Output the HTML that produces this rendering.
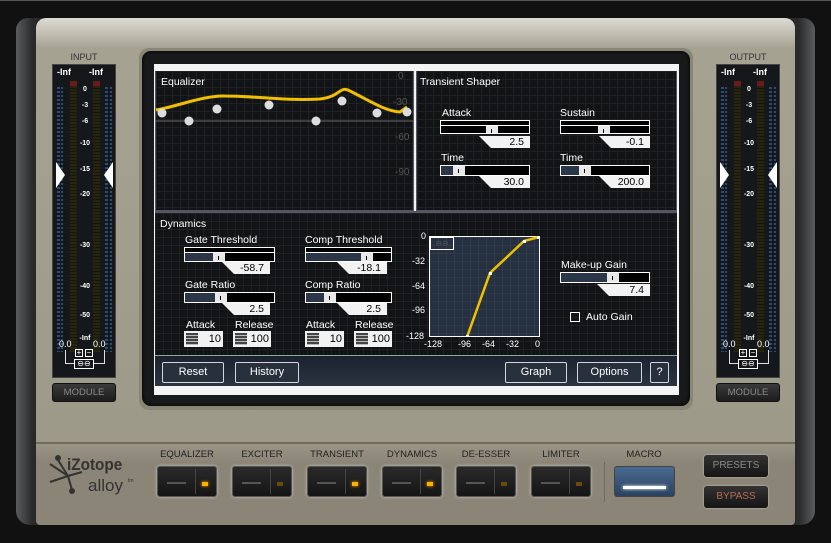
<!DOCTYPE html><html><head><style>
*{margin:0;padding:0;box-sizing:border-box}
body{width:831px;height:543px;background:#111;position:relative;overflow:hidden;font-family:"Liberation Sans",sans-serif}
.a{position:absolute}
.grid{background-color:#121314;background-image:linear-gradient(#1e2123 1px,transparent 1px),linear-gradient(90deg,#1e2123 1px,transparent 1px);background-size:8px 8px}
.t{color:#fff;font-size:10.5px;position:absolute;white-space:nowrap}
.bar{position:absolute;border:1px solid #fff;background:#000;height:11px}
.bar .f{position:absolute;left:0;top:0;bottom:0;background:#2b3648}
.bar .k{position:absolute;top:0;bottom:0;width:12px;background:#e8e8e8}
.bar .k:after{content:"";position:absolute;left:5px;top:3px;width:1px;height:4px;background:#000}
.val{position:absolute;background:#f2f2f2;color:#000;font-size:10.5px;text-align:right;padding-right:6px;height:12px;line-height:12px;clip-path:polygon(0 0,100% 0,100% 100%,12px 100%)}
.btn{position:absolute;border:1px solid #cfd6de;border-radius:2px;background:#28303c;color:#fff;font-size:11px;text-align:center;height:21px;line-height:19px}
.mb{position:absolute;width:60px;height:31px;background:linear-gradient(#2a2a2a,#151515);border:1px solid #555;border-radius:3px;box-shadow:0 0 3px #fff8}
.mb .d{position:absolute;left:37px;top:2px;bottom:2px;width:1px;background:#444}
.mb .ln{position:absolute;left:9px;top:15px;width:19px;height:2px;background:#555}
.mb .led{position:absolute;left:44px;top:15px;width:6px;height:4px;background:#6a4a10}
.mb .on{background:#ffb000;box-shadow:0 0 3px #ffa000}
.ml{position:absolute;font-size:9.5px;color:#222;width:80px;text-align:center}
.meter{position:absolute;width:64px;height:314px;background:#15181b;border:1px solid #444}
.sc{position:absolute;left:24px;width:16px;text-align:center;color:#fff;font-size:7px;font-weight:bold}
.ab{position:absolute;height:16px;background:#f2f2f2;color:#000;font-size:11px;text-align:right;padding-right:2px;line-height:16px}
.ab i{position:absolute;left:2px;top:2px;width:12px;height:12px;background:repeating-linear-gradient(#444 0 2px,#bbb 2px 3px)}
</style></head><body>
<div class="a" style="left:0;top:0;width:831px;height:1px;background:#555"></div>
<div class="a" style="left:16px;top:18px;width:40px;height:507px;border-radius:12px 0 0 14px;background:linear-gradient(90deg,#5a5c5e,#2a2b2c 40%,#1a1a1a)"></div>
<div class="a" style="left:775px;top:18px;width:40px;height:507px;border-radius:0 12px 14px 0;background:linear-gradient(90deg,#1a1a1a,#2a2b2c 60%,#5a5c5e)"></div>
<div class="a" style="left:36px;top:18px;width:759px;height:507px;border-radius:10px 10px 4px 4px;background:linear-gradient(#dcdad2 0,#c8c5ba 12px,#a6a292 30px,#9e9a8a 420px,#8a8576 445px,#8a8576 515px,#7a7566 520px)"></div>
<div class="a" style="left:36px;top:442px;width:759px;height:2px;background:#726d5b"></div>
<!-- INPUT -->
<div class="a" style="left:52px;top:52px;width:64px;text-align:center;font-size:9px;color:#333">INPUT</div>
<div class="meter" style="left:52px;top:64px">
 <div class="t" style="left:4px;top:2px;font-size:9px;font-weight:bold">-Inf</div><div class="t" style="left:36px;top:2px;font-size:9px;font-weight:bold">-Inf</div>
 <div class="a" style="left:4px;top:22px;width:3px;height:265px;background:repeating-linear-gradient(#2d4a78 0 2px,transparent 2px 4px)"></div>
 <div class="a" style="left:8px;top:22px;width:2px;height:265px;background:repeating-linear-gradient(#2d4a78 0 2px,transparent 2px 4px)"></div>
 <div class="a" style="left:17px;top:18px;width:7px;height:270px;background:repeating-linear-gradient(#28250f 0 2px,#171712 2px 3px)"></div>
 <div class="a" style="left:40px;top:18px;width:7px;height:270px;background:repeating-linear-gradient(#28250f 0 2px,#171712 2px 3px)"></div>
 <div class="a" style="left:17px;top:16px;width:7px;height:5px;background:#6a1a1a"></div><div class="a" style="left:40px;top:16px;width:7px;height:5px;background:#6a1a1a"></div>
 <div class="a" style="left:52px;top:22px;width:3px;height:265px;background:repeating-linear-gradient(#2d4a78 0 2px,transparent 2px 4px)"></div>
 <div class="a" style="left:57px;top:22px;width:2px;height:265px;background:repeating-linear-gradient(#2d4a78 0 2px,transparent 2px 4px)"></div>
 <div class="sc" style="top:21px">0</div><div class="sc" style="top:37px">-3</div><div class="sc" style="top:53px">-6</div><div class="sc" style="top:75px">-10</div><div class="sc" style="top:101px">-15</div><div class="sc" style="top:126px">-20</div><div class="sc" style="top:177px">-30</div><div class="sc" style="top:218px">-40</div><div class="sc" style="top:247px">-50</div><div class="sc" style="top:270px">-Inf</div>
 <div class="a" style="left:3px;top:97px;width:9px;height:26px;background:#fff;clip-path:polygon(0 0,100% 50%,0 100%)"></div>
 <div class="a" style="left:51px;top:97px;width:9px;height:26px;background:#fff;clip-path:polygon(100% 0,0 50%,100% 100%)"></div>
 <div class="t" style="left:6px;top:274px;font-size:9px">0.0</div><div class="t" style="left:40px;top:274px;font-size:9px">0.0</div>
 <div class="a" style="left:12px;top:285px;width:40px;height:14px;border:1px solid #ddd;border-top:none"></div>
 <div class="a" style="left:22px;top:284px;width:8px;height:8px;border:1px solid #fff;background:#15181b;color:#fff;font-size:8px;line-height:6px;text-align:center">+</div>
 <div class="a" style="left:32px;top:284px;width:8px;height:8px;border:1px solid #fff;background:#15181b;color:#fff;font-size:8px;line-height:6px;text-align:center">−</div>
 <div class="a" style="left:21px;top:294px;width:20px;height:10px;border:1px solid #fff;background:#15181b;color:#fff;font-size:8px;line-height:8px;text-align:center">⊖⊖</div>
</div>
<div class="a" style="left:52px;top:383px;width:64px;height:19px;border-radius:3px;background:linear-gradient(#3a3a3a,#1c1c1c);border:1px solid #111;color:#888;font-size:9.5px;text-align:center;line-height:17px">MODULE</div>
<!-- OUTPUT -->
<div class="a" style="left:716px;top:52px;width:64px;text-align:center;font-size:9px;color:#333">OUTPUT</div>
<div class="meter" style="left:716px;top:64px">
 <div class="t" style="left:4px;top:2px;font-size:9px;font-weight:bold">-Inf</div><div class="t" style="left:36px;top:2px;font-size:9px;font-weight:bold">-Inf</div>
 <div class="a" style="left:4px;top:22px;width:3px;height:265px;background:repeating-linear-gradient(#2d4a78 0 2px,transparent 2px 4px)"></div>
 <div class="a" style="left:8px;top:22px;width:2px;height:265px;background:repeating-linear-gradient(#2d4a78 0 2px,transparent 2px 4px)"></div>
 <div class="a" style="left:17px;top:18px;width:7px;height:270px;background:repeating-linear-gradient(#28250f 0 2px,#171712 2px 3px)"></div>
 <div class="a" style="left:40px;top:18px;width:7px;height:270px;background:repeating-linear-gradient(#28250f 0 2px,#171712 2px 3px)"></div>
 <div class="a" style="left:17px;top:16px;width:7px;height:5px;background:#6a1a1a"></div><div class="a" style="left:40px;top:16px;width:7px;height:5px;background:#6a1a1a"></div>
 <div class="a" style="left:52px;top:22px;width:3px;height:265px;background:repeating-linear-gradient(#2d4a78 0 2px,transparent 2px 4px)"></div>
 <div class="a" style="left:57px;top:22px;width:2px;height:265px;background:repeating-linear-gradient(#2d4a78 0 2px,transparent 2px 4px)"></div>
 <div class="sc" style="top:21px">0</div><div class="sc" style="top:37px">-3</div><div class="sc" style="top:53px">-6</div><div class="sc" style="top:75px">-10</div><div class="sc" style="top:101px">-15</div><div class="sc" style="top:126px">-20</div><div class="sc" style="top:177px">-30</div><div class="sc" style="top:218px">-40</div><div class="sc" style="top:247px">-50</div><div class="sc" style="top:270px">-Inf</div>
 <div class="a" style="left:3px;top:97px;width:9px;height:26px;background:#fff;clip-path:polygon(0 0,100% 50%,0 100%)"></div>
 <div class="a" style="left:51px;top:97px;width:9px;height:26px;background:#fff;clip-path:polygon(100% 0,0 50%,100% 100%)"></div>
 <div class="t" style="left:6px;top:274px;font-size:9px">0.0</div><div class="t" style="left:40px;top:274px;font-size:9px">0.0</div>
 <div class="a" style="left:12px;top:285px;width:40px;height:14px;border:1px solid #ddd;border-top:none"></div>
 <div class="a" style="left:22px;top:284px;width:8px;height:8px;border:1px solid #fff;background:#15181b;color:#fff;font-size:8px;line-height:6px;text-align:center">+</div>
 <div class="a" style="left:32px;top:284px;width:8px;height:8px;border:1px solid #fff;background:#15181b;color:#fff;font-size:8px;line-height:6px;text-align:center">−</div>
 <div class="a" style="left:21px;top:294px;width:20px;height:10px;border:1px solid #fff;background:#15181b;color:#fff;font-size:8px;line-height:8px;text-align:center">⊖⊖</div>
</div>
<div class="a" style="left:716px;top:383px;width:64px;height:19px;border-radius:3px;background:linear-gradient(#3a3a3a,#1c1c1c);border:1px solid #111;color:#888;font-size:9.5px;text-align:center;line-height:17px">MODULE</div>
<!-- screen -->
<div class="a" style="left:139px;top:48px;width:554px;height:362px;border-radius:10px;background:#8a8676"></div>
<div class="a" style="left:142px;top:51px;width:548px;height:355px;border-radius:9px;background:#18191b;box-shadow:inset 0 0 4px #000"></div>
<div class="a" style="left:154px;top:64px;width:525px;height:331px;background:#f4f4f4"></div>
<div class="a grid" style="left:155px;top:71px;width:259px;height:140px;border:1px solid #556;border-top:none"></div>
<div class="a grid" style="left:416px;top:71px;width:261px;height:140px;border:1px solid #556;border-top:none"></div>
<div class="a" style="left:155px;top:211px;width:522px;height:2px;background:#556"></div>
<div class="a grid" style="left:155px;top:213px;width:522px;height:142px"></div>
<div class="a" style="left:155px;top:355px;width:522px;height:1px;background:#8a9"></div>
<div class="a" style="left:155px;top:356px;width:522px;height:30px;background:linear-gradient(#1c2330,#2a3340)"></div>
<!-- equalizer -->
<div class="t" style="left:161px;top:76px">Equalizer</div>
<div class="t" style="left:398px;top:71px;color:#555;font-size:10px">0</div>
<div class="t" style="left:393px;top:97px;color:#555;font-size:10px">-30</div>
<div class="t" style="left:395px;top:132px;color:#555;font-size:10px">-60</div>
<div class="t" style="left:395px;top:167px;color:#555;font-size:10px">-90</div>
<svg class="a" style="left:155px;top:71px" width="259" height="140">
<line x1="0" y1="50" x2="259" y2="50" stroke="#666" stroke-width="1"/>
<path d="M1 39 C20 36,50 24,70 25 C100 25,130 30,165 28 C185 26,185 14,195 20 C215 30,230 40,245 41 L252 36" stroke="#f0c000" stroke-width="3" fill="none"/>
<g fill="#ddd"><circle cx="7" cy="42" r="4.5"/><circle cx="34" cy="50" r="4.5"/><circle cx="62" cy="38" r="4.5"/><circle cx="114" cy="34" r="4.5"/><circle cx="161" cy="50" r="4.5"/><circle cx="187" cy="30" r="4.5"/><circle cx="222" cy="42" r="4.5"/><circle cx="252" cy="41" r="4.5"/></g>
</svg>
<!-- transient -->
<div class="t" style="left:420px;top:76px">Transient Shaper</div>
<div class="t" style="left:442px;top:107px">Attack</div>
<div class="bar" style="left:440px;top:120px;width:90px;height:14px"><div class="a" style="left:0;right:0;top:4px;height:1px;background:#fff"></div><div class="k" style="left:45px;top:5px"></div></div>
<div class="val" style="left:479px;top:136px;width:51px">2.5</div>
<div class="t" style="left:560px;top:107px">Sustain</div>
<div class="bar" style="left:560px;top:120px;width:90px;height:14px"><div class="a" style="left:0;right:0;top:4px;height:1px;background:#fff"></div><div class="k" style="left:37px;top:5px"></div></div>
<div class="val" style="left:599px;top:136px;width:51px">-0.1</div>
<div class="t" style="left:441px;top:152px">Time</div>
<div class="bar" style="left:440px;top:165px;width:90px"><div class="f" style="width:12px"></div><div class="k" style="left:12px"></div></div>
<div class="val" style="left:479px;top:176px;width:51px">30.0</div>
<div class="t" style="left:560px;top:152px">Time</div>
<div class="bar" style="left:560px;top:165px;width:90px"><div class="f" style="width:18px"></div><div class="k" style="left:18px"></div></div>
<div class="val" style="left:599px;top:176px;width:51px">200.0</div>
<!-- dynamics -->
<div class="t" style="left:160px;top:218px">Dynamics</div>
<div class="t" style="left:185px;top:234px">Gate Threshold</div>
<div class="bar" style="left:184px;top:247px;width:91px;height:15px"><div class="a" style="left:0;right:0;top:4px;height:1px;background:#fff"></div><div class="f" style="top:5px;width:28px"></div><div class="k" style="left:28px;top:5px"></div></div>
<div class="val" style="left:222px;top:262px;width:48px">-58.7</div>
<div class="t" style="left:305px;top:234px">Comp Threshold</div>
<div class="bar" style="left:305px;top:247px;width:87px;height:15px"><div class="a" style="left:0;right:0;top:4px;height:1px;background:#fff"></div><div class="f" style="top:5px;width:55px"></div><div class="k" style="left:55px;top:5px"></div></div>
<div class="val" style="left:337px;top:262px;width:50px">-18.1</div>
<div class="t" style="left:185px;top:279px">Gate Ratio</div>
<div class="bar" style="left:184px;top:292px;width:91px"><div class="f" style="width:30px"></div><div class="k" style="left:30px"></div></div>
<div class="val" style="left:222px;top:303px;width:48px">2.5</div>
<div class="t" style="left:305px;top:279px">Comp Ratio</div>
<div class="bar" style="left:305px;top:292px;width:87px"><div class="f" style="width:18px"></div><div class="k" style="left:18px"></div></div>
<div class="val" style="left:337px;top:303px;width:50px">2.5</div>
<div class="t" style="left:186px;top:319px">Attack</div><div class="t" style="left:235px;top:319px">Release</div>
<div class="t" style="left:306px;top:319px">Attack</div><div class="t" style="left:355px;top:319px">Release</div>
<div class="ab" style="left:184px;top:331px;width:39px"><i></i>10</div>
<div class="ab" style="left:233px;top:331px;width:38px"><i></i>100</div>
<div class="ab" style="left:305px;top:331px;width:39px"><i></i>10</div>
<div class="ab" style="left:354px;top:331px;width:38px"><i></i>100</div>
<!-- graph -->
<div class="a" style="left:429px;top:236px;width:111px;height:101px;border:1px solid #fff;background-color:#253141;background-image:linear-gradient(#2f3b4b 1px,transparent 1px),linear-gradient(90deg,#2f3b4b 1px,transparent 1px);background-size:8px 8px"></div>
<div class="a" style="left:430px;top:237px;width:24px;height:13px;border:1px solid #fff;color:#555;font-size:8px;line-height:11px;text-align:center">⊖⊖</div>
<svg class="a" style="left:429px;top:236px" width="111" height="101"><polyline points="38,101 61,37 95,5 110,1" stroke="#f0c000" stroke-width="2.5" fill="none"/><g fill="#fff"><rect x="37" y="99" width="3" height="3"/><rect x="60" y="36" width="3" height="3"/><rect x="94" y="4" width="3" height="3"/><rect x="108" y="0" width="3" height="3"/></g></svg>
<div class="t" style="left:421px;top:231px;font-size:9px">0</div>
<div class="t" style="left:412px;top:256px;font-size:9px">-32</div>
<div class="t" style="left:412px;top:281px;font-size:9px">-64</div>
<div class="t" style="left:412px;top:305px;font-size:9px">-96</div>
<div class="t" style="left:406px;top:331px;font-size:9px">-128</div>
<div class="t" style="left:424px;top:339px;font-size:9px">-128</div>
<div class="t" style="left:458px;top:339px;font-size:9px">-96</div>
<div class="t" style="left:482px;top:339px;font-size:9px">-64</div>
<div class="t" style="left:506px;top:339px;font-size:9px">-32</div>
<div class="t" style="left:535px;top:339px;font-size:9px">0</div>
<div class="t" style="left:561px;top:259px">Make-up Gain</div>
<div class="bar" style="left:560px;top:272px;width:90px"><div class="f" style="width:46px"></div><div class="k" style="left:46px"></div></div>
<div class="val" style="left:597px;top:284px;width:53px">7.4</div>
<div class="a" style="left:570px;top:312px;width:10px;height:10px;border:1px solid #fff"></div>
<div class="t" style="left:586px;top:311px">Auto Gain</div>
<div class="btn" style="left:162px;top:362px;width:62px">Reset</div>
<div class="btn" style="left:235px;top:362px;width:64px">History</div>
<div class="btn" style="left:505px;top:362px;width:62px">Graph</div>
<div class="btn" style="left:577px;top:362px;width:65px">Options</div>
<div class="btn" style="left:650px;top:362px;width:19px">?</div>
<!-- bottom -->
<svg class="a" style="left:46px;top:452px" width="40" height="45"><g stroke="#333" stroke-width="2" fill="#333"><line x1="4" y1="12" x2="22" y2="24"/><line x1="22" y1="24" x2="12" y2="8"/><line x1="22" y1="24" x2="4" y2="30"/><line x1="22" y1="24" x2="26" y2="38"/><line x1="22" y1="24" x2="36" y2="20"/><circle cx="12" cy="6" r="2"/><circle cx="26" cy="39" r="2"/></g></svg>
<div class="a" style="left:67px;top:455px;font-size:17px;font-weight:bold;color:#333;transform:scaleX(0.9);transform-origin:left">iZotope</div>
<div class="a" style="left:88px;top:476px;font-size:17px;color:#333">alloy</div>
<div class="a" style="left:128px;top:478px;font-size:5px;color:#333">tm</div>
<div class="ml" style="left:147px;top:449px">EQUALIZER</div>
<div class="ml" style="left:222px;top:449px">EXCITER</div>
<div class="ml" style="left:297px;top:449px">TRANSIENT</div>
<div class="ml" style="left:372px;top:449px">DYNAMICS</div>
<div class="ml" style="left:446px;top:449px">DE-ESSER</div>
<div class="ml" style="left:521px;top:449px">LIMITER</div>
<div class="ml" style="left:604px;top:449px">MACRO</div>
<div class="mb" style="left:157px;top:466px"><div class="d"></div><div class="ln"></div><div class="led on"></div></div>
<div class="mb" style="left:232px;top:466px"><div class="d"></div><div class="ln"></div><div class="led"></div></div>
<div class="mb" style="left:307px;top:466px"><div class="d"></div><div class="ln"></div><div class="led on"></div></div>
<div class="mb" style="left:382px;top:466px"><div class="d"></div><div class="ln"></div><div class="led on"></div></div>
<div class="mb" style="left:456px;top:466px"><div class="d"></div><div class="ln"></div><div class="led"></div></div>
<div class="mb" style="left:531px;top:466px"><div class="d"></div><div class="ln"></div><div class="led"></div></div>
<div class="a" style="left:604px;top:462px;width:1px;height:40px;background:#6e6a5c"></div>
<div class="a" style="left:614px;top:466px;width:61px;height:31px;border-radius:3px;border:1px solid #444;background:linear-gradient(#4a6a90,#2a4260)"><div class="a" style="left:8px;top:19px;width:43px;height:3px;background:#fff;box-shadow:0 0 3px #fff"></div></div>
<div class="a" style="left:704px;top:455px;width:64px;height:22px;border-radius:3px;background:linear-gradient(#333,#151515);color:#888;font-size:10px;text-align:center;line-height:22px;box-shadow:0 0 2px #fff8">PRESETS</div>
<div class="a" style="left:704px;top:486px;width:64px;height:22px;border-radius:3px;background:linear-gradient(#333,#151515);color:#b86a58;font-size:10px;text-align:center;line-height:22px;box-shadow:0 0 2px #fff8">BYPASS</div>
</body></html>
